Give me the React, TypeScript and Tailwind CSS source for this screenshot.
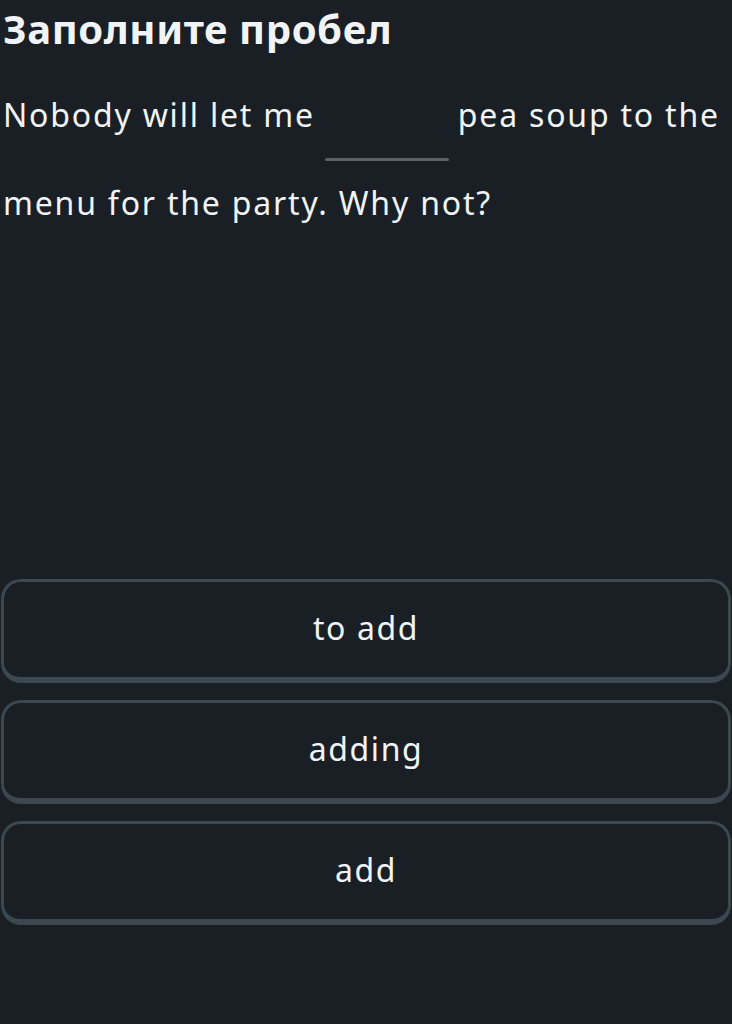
const options = ["to add", "adding", "add"]

export default function App() {
	return (
		<div
			className="flex h-[1024px] w-[732px] flex-col bg-[#1a1f25] text-[#f1f4f6]"
			style={{ fontFamily: '"Noto Sans", "Open Sans", sans-serif' }}
		>
			<h1 className="px-[3px] pt-[4px] text-[40px] font-bold leading-[50px] tracking-[0.6px]">Заполните пробел</h1>

			<p className="mt-[17px] px-[3px] text-[32px] leading-[88px] tracking-[1.8px]">
				Nobody will let me
				<span className="mr-[9px] mb-[-34px] ml-[10px] inline-block h-[3px] w-[124px] rounded-full bg-[#5b6169] align-baseline" />
				pea soup to the menu for the party. Why not?
			</p>

			<div className="mt-auto mb-[99px] flex flex-col gap-[17px] px-[1px]">
				{options.map((opt) => (
					<button
						key={opt}
						className="flex h-[104px] items-center justify-center rounded-[20px] border-[3px] border-b-[6px] border-[#3d4750] bg-[#1a1f25] pb-[3px] text-[32px] tracking-[1.6px] text-[#f1f4f6]"
					>
						{opt}
					</button>
				))}
			</div>
		</div>
	)
}
